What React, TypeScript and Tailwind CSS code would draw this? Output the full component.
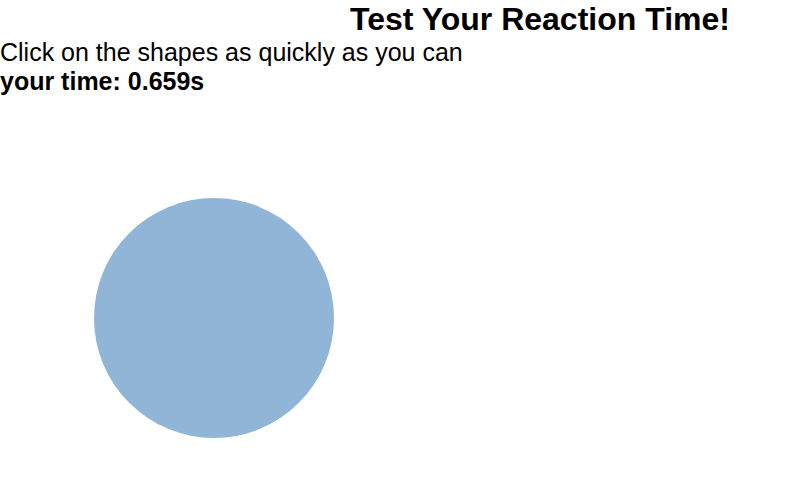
export default function App() {
  return (
    <div className="w-[792px] h-[499px] bg-white text-black font-['Liberation_Sans',Arial,sans-serif]">
      <h1 className="pl-[350px] text-[32px] leading-[38px] font-bold">Test Your Reaction Time!</h1>
      <p className="text-[25px] leading-[29px]">Click on the shapes as quickly as you can</p>
      <p className="text-[25px] leading-[29px] font-bold">your time: 0.659s</p>
      <div className="pl-[94px] pt-[102px]">
        <div className="w-[240px] h-[240px] rounded-full bg-[#91b5d6]" />
      </div>
    </div>
  )
}
